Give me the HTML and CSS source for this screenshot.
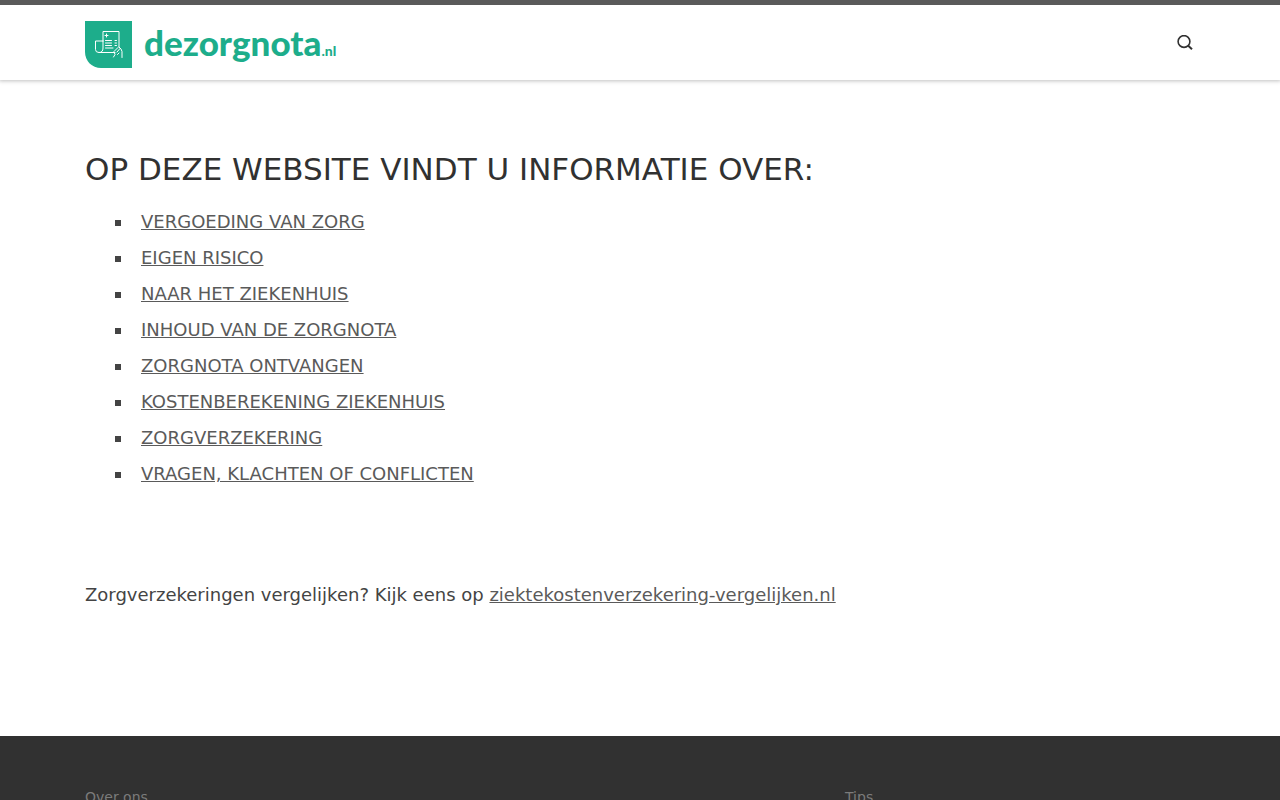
FILE: index.html
```html
<!DOCTYPE html>
<html lang="nl">
<head>
<meta charset="utf-8">
<meta name="viewport" content="width=device-width, initial-scale=1">
<title>dezorgnota.nl</title>
<link rel="stylesheet" href="styles.css">
</head>
<body>
<header class="site-header">
  <div class="container header-row">
    <a class="brand" href="#">
      <svg class="brand-mark" viewBox="0 0 47 47" aria-hidden="true">
        <path d="M0 0H47V47H16C7 47 0 40 0 31Z" fill="#1dad8b"/>
        <g fill="none" stroke="#fff" stroke-width="1" stroke-linejoin="round" stroke-linecap="round">
          <path d="M18 20V10.500H34V26"/>
          <path d="M18 20H10.500V28.500Q10.500 31.500 14 31.500Q18 31.500 18 27V20M14 31.500H30"/>
          <path d="M20 14.500H23M21.500 13V16"/>
          <path d="M20.500 19.500H26.500M20.500 22H26.500M20.500 24.500H26.500M20.500 27H28M30 19.500H31.500M30 22H31.500M30 24.500H31.500"/>
          <path d="M28.500 36L30 33.500 29 30.500 33 26.500M32 31L35 27.500M32.500 33.500L34 32M34 26L36 28 37 30.500V36.500"/>
        </g>
      </svg>
      <span class="brand-name">dezorgnota<span class="brand-tld">.nl</span></span>
    </a>
    <button class="search-button" type="button" aria-label="Zoeken">
      <svg class="search-icon" viewBox="0 0 16 16" aria-hidden="true">
        <circle cx="7" cy="6.500" r="5.900" fill="none" stroke="#313131" stroke-width="1.600"/>
        <path d="M11 10.500L15 14.200" stroke="#313131" stroke-width="2"/>
      </svg>
    </button>
  </div>
</header>
<main class="container content">
  <h1 class="title">OP DEZE WEBSITE VINDT U INFORMATIE OVER:</h1>
  <ul class="topics">
    <li><a href="#">VERGOEDING VAN ZORG</a></li>
    <li><a href="#">EIGEN RISICO</a></li>
    <li><a href="#">NAAR HET ZIEKENHUIS</a></li>
    <li><a href="#">INHOUD VAN DE ZORGNOTA</a></li>
    <li><a href="#">ZORGNOTA ONTVANGEN</a></li>
    <li><a href="#">KOSTENBEREKENING ZIEKENHUIS</a></li>
    <li><a href="#">ZORGVERZEKERING</a></li>
    <li><a href="#">VRAGEN, KLACHTEN OF CONFLICTEN</a></li>
  </ul>
  <p class="compare">Zorgverzekeringen vergelijken? Kijk eens op <a href="#">ziektekostenverzekering-vergelijken.nl</a></p>
</main>
<footer class="site-footer">
  <div class="container footer-columns">
    <section><h2 class="footer-title">Over ons</h2></section>
    <section></section>
    <section><h2 class="footer-title">Tips</h2></section>
  </div>
</footer>
</body>
</html>
```

FILE: styles.css
```css
* {
  box-sizing: border-box;
}

body {
  margin: 0;
  background: #fff;
  color: #444;
  font: 18px/27px "DejaVu Sans", sans-serif;
}

.container {
  width: 100%;
  max-width: 1140px;
  margin: 0 auto;
  padding: 0 15px;
}

.site-header {
  position: relative;
  border-top: 5px solid #5a5a5a;
  background: #fff;
  box-shadow: 0 0 4px 1px rgba(0, 0, 0, 0.25);
}

.header-row {
  display: flex;
  align-items: center;
  justify-content: space-between;
  padding-top: 12px;
  padding-bottom: 12px;
}

.brand {
  display: flex;
  align-items: center;
  gap: 12px;
  padding-top: 4px;
  color: #1dad8b;
  text-decoration: none;
}

.brand-mark {
  display: block;
  width: 47px;
  height: 47px;
}

.brand-name {
  height: 47px;
  font: 900 35px/43px Lato, sans-serif;
}

.brand-tld {
  font-size: 14px;
  line-height: 1;
}

.search-button {
  display: flex;
  padding: 2px;
  border: 0;
  background: none;
  cursor: pointer;
}

.search-icon {
  width: 16px;
  height: 16px;
}

.content {
  padding-top: 65px;
  padding-bottom: 128px;
}

.title {
  margin: 0 0 15px;
  color: #313131;
  font-size: 31px;
  font-weight: 400;
  line-height: 48px;
}

.topics {
  margin: 0;
  padding-left: 48px;
  list-style: square;
}

.topics li {
  padding-bottom: 9px;
  padding-left: 8px;
}

.content a {
  color: #5a5a5a;
  text-decoration: underline;
}

.compare {
  margin: 85px 0 0;
}

.site-footer {
  padding: 51px 0;
  background: #313131;
}

.footer-columns {
  display: grid;
  grid-template-columns: repeat(3, 1fr);
  column-gap: 30px;
}

.footer-title {
  margin: 0;
  color: #7b7b7b;
  font-size: 14px;
  font-weight: 400;
  line-height: 21px;
}
```
